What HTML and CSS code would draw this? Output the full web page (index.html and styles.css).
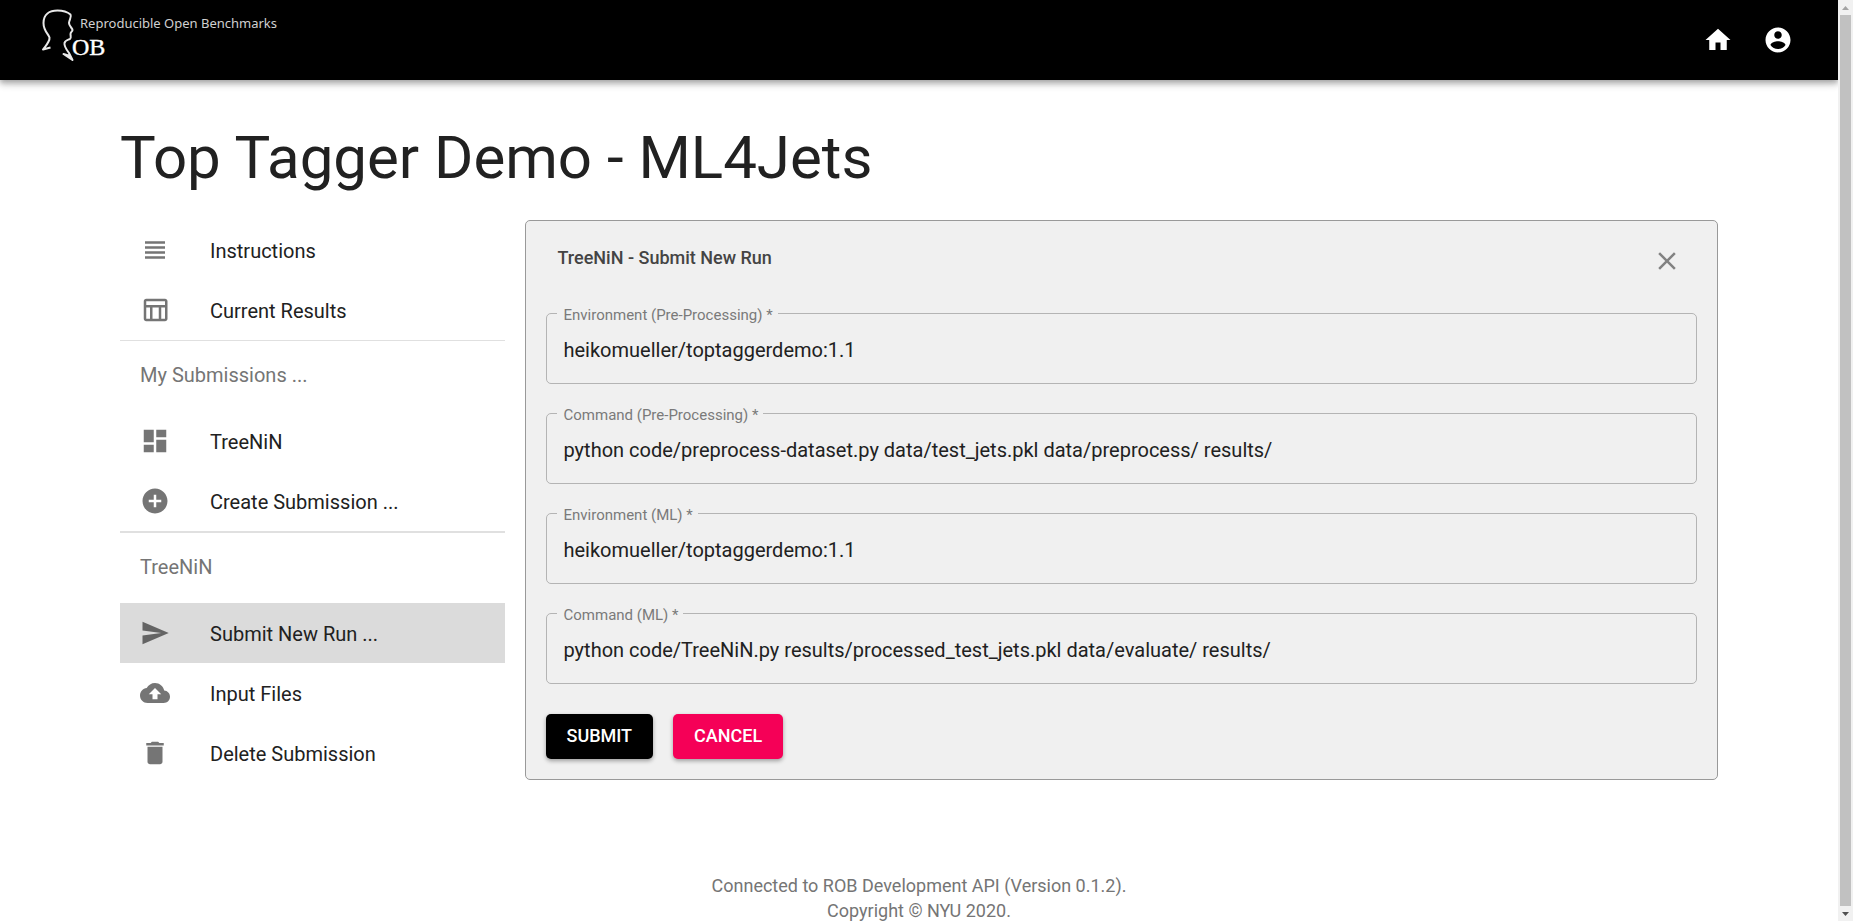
FILE: index.html
```html
<!DOCTYPE html>
<html lang="en">
<head>
<meta charset="utf-8">
<title>Top Tagger Demo - ML4Jets</title>
<link rel="stylesheet" href="styles.css">
</head>
<body>
<header class="app-bar">
  <a class="logo" href="#" aria-label="Reproducible Open Benchmarks">
    <svg width="280" height="60" viewBox="30 4 280 60">
      <path class="logo-head" d="M50.500 47.500L43 49.500C46 45.500 50 41.500 49.500 37.500C48.500 34 43.500 31 43.500 23C43.500 14.500 49.500 10.500 57.500 10.500C63 10.500 67.500 12 70.500 14.500C72 17 69 20 69 23C69 26.500 72.500 28 72.500 30C72.500 31.500 70.500 32 70.500 34C70.500 36 71.500 38 70 39C67.500 40 65 40.500 64.500 43C64 46.500 66.500 49.500 69 53L72.500 60L63.500 54L70 56"/>
      <text class="logo-name" x="80" y="28">Reproducible Open Benchmarks</text>
      <text class="logo-ob" x="72" y="55">OB</text>
    </svg>
  </a>
  <nav class="app-actions">
    <button class="icon-button" type="button" aria-label="Home"><svg viewBox="0 0 24 24"><path d="M10 20v-6h4v6h5v-8h3L12 3 2 12h3v8z"/></svg></button>
    <button class="icon-button" type="button" aria-label="Account"><svg viewBox="0 0 24 24"><path d="M12 2C6.480 2 2 6.480 2 12s4.480 10 10 10 10-4.480 10-10S17.520 2 12 2zm0 3c1.660 0 3 1.340 3 3s-1.340 3-3 3-3-1.340-3-3 1.340-3 3-3zm0 14.200c-2.500 0-4.710-1.280-6-3.220.03-1.990 4-3.080 6-3.080 1.990 0 5.970 1.090 6 3.080-1.290 1.940-3.500 3.220-6 3.220z"/></svg></button>
  </nav>
</header>

<main class="page">
  <h1 class="page-title">Top Tagger Demo - ML4Jets</h1>
  <div class="columns">
    <nav class="sidebar">
      <ul class="menu">
        <li><a class="menu-item" href="#"><svg class="menu-icon" viewBox="0 0 24 24"><path d="M4 15h16v-2H4v2zm0 4h16v-2H4v2zm0-8h16V9H4v2zm0-6v2h16V5H4z"/></svg><span class="menu-text">Instructions</span></a></li>
        <li><a class="menu-item" href="#"><svg class="menu-icon" viewBox="0 0 24 24"><path d="M20 3H5c-1.100 0-2 .9-2 2v14c0 1.100.9 2 2 2h15c1.100 0 2-.9 2-2V5c0-1.100-.9-2-2-2zm0 2v3H5V5h15zm-5 14h-5v-9h5v9zM5 10h3v9H5v-9zm12 9v-9h3v9h-3z"/></svg><span class="menu-text">Current Results</span></a></li>
      </ul>
      <h2 class="menu-heading">My Submissions ...</h2>
      <ul class="menu">
        <li><a class="menu-item" href="#"><svg class="menu-icon" viewBox="0 0 24 24"><path d="M3 13h8V3H3v10zm0 8h8v-6H3v6zm10 0h8V11h-8v10zm0-18v6h8V3h-8z"/></svg><span class="menu-text">TreeNiN</span></a></li>
        <li><a class="menu-item" href="#"><svg class="menu-icon" viewBox="0 0 24 24"><path d="M12 2C6.480 2 2 6.480 2 12s4.480 10 10 10 10-4.480 10-10S17.520 2 12 2zm5 11h-4v4h-2v-4H7v-2h4V7h2v4h4v2z"/></svg><span class="menu-text">Create Submission ...</span></a></li>
      </ul>
      <h2 class="menu-heading menu-heading-strong">TreeNiN</h2>
      <ul class="menu">
        <li><a class="menu-item menu-item-selected" href="#" aria-current="page"><svg class="menu-icon" viewBox="0 0 24 24"><path d="M2.010 21L23 12 2.010 3 2 10l15 2-15 2z"/></svg><span class="menu-text">Submit New Run ...</span></a></li>
        <li><a class="menu-item" href="#"><svg class="menu-icon" viewBox="0 0 24 24"><path d="M19.350 10.040C18.670 6.590 15.640 4 12 4 9.110 4 6.600 5.640 5.350 8.040 2.340 8.360 0 10.910 0 14c0 3.310 2.690 6 6 6h13c2.760 0 5-2.240 5-5 0-2.640-2.050-4.780-4.650-4.960zM14 13v4h-4v-4H7l5-5 5 5h-3z"/></svg><span class="menu-text">Input Files</span></a></li>
        <li><a class="menu-item" href="#"><svg class="menu-icon" viewBox="0 0 24 24"><path d="M6 19c0 1.100.9 2 2 2h8c1.100 0 2-.9 2-2V7H6v12zM19 4h-3.500l-1-1h-5l-1 1H5v2h14V4z"/></svg><span class="menu-text">Delete Submission</span></a></li>
      </ul>
    </nav>

    <form class="panel">
      <div class="panel-header">
        <h2 class="panel-title">TreeNiN - Submit New Run</h2>
        <button class="close-button" type="button" aria-label="Close"><svg viewBox="0 0 24 24"><path d="M19 6.410L17.590 5 12 10.590 6.410 5 5 6.410 10.590 12 5 17.590 6.410 19 12 13.410 17.590 19 19 17.590 13.410 12z"/></svg></button>
      </div>
      <div class="fields">
        <div class="field">
          <label class="field-label" for="env-pre">Environment (Pre-Processing) *</label>
          <input class="field-input" id="env-pre" type="text" required value="heikomueller/toptaggerdemo:1.1">
        </div>
        <div class="field">
          <label class="field-label" for="cmd-pre">Command (Pre-Processing) *</label>
          <input class="field-input" id="cmd-pre" type="text" required value="python code/preprocess-dataset.py data/test_jets.pkl data/preprocess/ results/">
        </div>
        <div class="field">
          <label class="field-label" for="env-ml">Environment (ML) *</label>
          <input class="field-input" id="env-ml" type="text" required value="heikomueller/toptaggerdemo:1.1">
        </div>
        <div class="field">
          <label class="field-label" for="cmd-ml">Command (ML) *</label>
          <input class="field-input" id="cmd-ml" type="text" required value="python code/TreeNiN.py results/processed_test_jets.pkl data/evaluate/ results/">
        </div>
      </div>
      <div class="actions">
        <button class="button button-primary" type="submit">SUBMIT</button>
        <button class="button button-secondary" type="button">CANCEL</button>
      </div>
    </form>
  </div>
</main>

<footer class="footer">
  <p>Connected to ROB Development API (Version 0.1.2).</p>
  <p>Copyright © NYU 2020.</p>
</footer>

<div class="scrollbar" aria-hidden="true">
  <svg class="scroll-arrow" viewBox="0 0 15 15"><path fill="#a3a3a3" d="M4 10L7.500 6L11 10z"/></svg>
  <div class="scroll-thumb"></div>
  <svg class="scroll-arrow" viewBox="0 0 15 15"><path fill="#505050" d="M4 6H11L7.500 10z"/></svg>
</div>
</body>
</html>
```
FILE: styles.css
```css
* {
  box-sizing: border-box;
}

html {
  scrollbar-width: none;
}

body {
  margin: 0;
  padding-right: 15px;
  background: #fff;
  color: #212121;
  font-family: Roboto, "Liberation Sans", sans-serif;
  font-size: 20px;
  line-height: 30px;
}

h1, h2, p, ul {
  margin: 0;
  padding: 0;
}

button {
  border: 0;
  background: none;
  font-family: inherit;
  cursor: pointer;
}

.app-bar {
  display: flex;
  align-items: center;
  justify-content: space-between;
  height: 80px;
  padding: 0 30px;
  background: #000;
  box-shadow: 0 2px 5px rgba(0, 0, 0, 0.2), 0 5px 6px rgba(0, 0, 0, 0.14), 0 1px 12px rgba(0, 0, 0, 0.12);
}

.logo {
  align-self: flex-start;
  padding-top: 4px;
}

.logo svg {
  display: block;
}

.logo-head {
  fill: none;
  stroke: #e8e8e8;
  stroke-width: 2;
  stroke-linejoin: round;
}

.logo-name {
  fill: #d0d0d0;
  font-family: "Noto Sans", sans-serif;
  font-size: 13px;
}

.logo-ob {
  fill: #fff;
  stroke: #fff;
  stroke-width: 0.400;
  font-family: "Liberation Serif", serif;
  font-size: 24px;
}

.app-actions {
  display: flex;
}

.icon-button {
  width: 60px;
  height: 60px;
  padding: 15px;
  fill: #fff;
}

.icon-button svg,
.close-button svg {
  display: block;
  width: 30px;
  height: 30px;
}

.page {
  padding: 43px 120px 0;
}

.page-title {
  margin-bottom: 27px;
  font-size: 60px;
  font-weight: 400;
  line-height: 70px;
}

.columns {
  display: grid;
  grid-template-columns: repeat(12, 1fr);
  column-gap: 20px;
  align-items: start;
}

.sidebar {
  grid-column: span 3;
}

.menu {
  list-style: none;
}

.menu-item {
  display: flex;
  align-items: center;
  height: 60px;
  padding: 0 20px;
  color: inherit;
  text-decoration: none;
}

.menu-item-selected {
  background: #dbdbdb;
}

.menu-icon {
  width: 30px;
  height: 30px;
  margin-right: 40px;
  fill: rgba(0, 0, 0, 0.54);
}

.menu-text {
  padding-top: 2px;
}

.menu-heading {
  padding: 19px 20px 21px;
  border-top: 1px solid #e0e0e0;
  color: #757575;
  font-size: 20px;
  font-weight: 400;
}

.menu-heading-strong {
  border-top-width: 2px;
}

.panel {
  grid-column: span 9;
  padding: 20px;
  border: 1px solid #999;
  border-radius: 5px;
  background: #f0f0f0;
}

.panel-header {
  display: flex;
  align-items: center;
  justify-content: space-between;
  height: 40px;
  padding: 0 15px 0 12px;
}

.panel-title {
  padding-bottom: 6px;
  color: #444;
  font-size: 18px;
  font-weight: 500;
  line-height: 24px;
}

.close-button {
  padding: 0;
  fill: #828282;
}

.fields {
  display: grid;
  gap: 29px;
  padding: 32px 0 30px;
}

.field {
  position: relative;
}

.field-label {
  position: absolute;
  top: -8px;
  left: 11px;
  padding: 0 5px 0 7px;
  background: #f0f0f0;
  color: #7a7a7a;
  font-size: 15px;
  line-height: 20px;
}

.field-input {
  display: block;
  width: 100%;
  height: 71px;
  padding: 2px 17px 0;
  border: 1px solid #b4b4b4;
  border-radius: 5px;
  background: transparent;
  color: #212121;
  font-family: inherit;
  font-size: 20px;
}

.actions {
  display: flex;
  gap: 20px;
}

.button {
  height: 45px;
  padding: 0 21px 2px;
  border-radius: 5px;
  color: #fff;
  font-size: 18px;
  font-weight: 500;
  box-shadow: 0 2px 4px rgba(0, 0, 0, 0.35);
}

.button-primary {
  background: #000;
}

.button-secondary {
  background: #f50057;
}

.footer {
  padding-top: 90px;
  color: #757575;
  font-size: 18px;
  line-height: 25px;
  text-align: center;
}

.scrollbar {
  position: fixed;
  top: 0;
  right: 0;
  bottom: 0;
  display: flex;
  flex-direction: column;
  width: 15px;
  background: #f1f1f1;
}

.scroll-arrow {
  width: 15px;
  height: 15px;
}

.scroll-thumb {
  flex: 1;
  margin: 0 2px;
  background: #c1c1c1;
}
```
